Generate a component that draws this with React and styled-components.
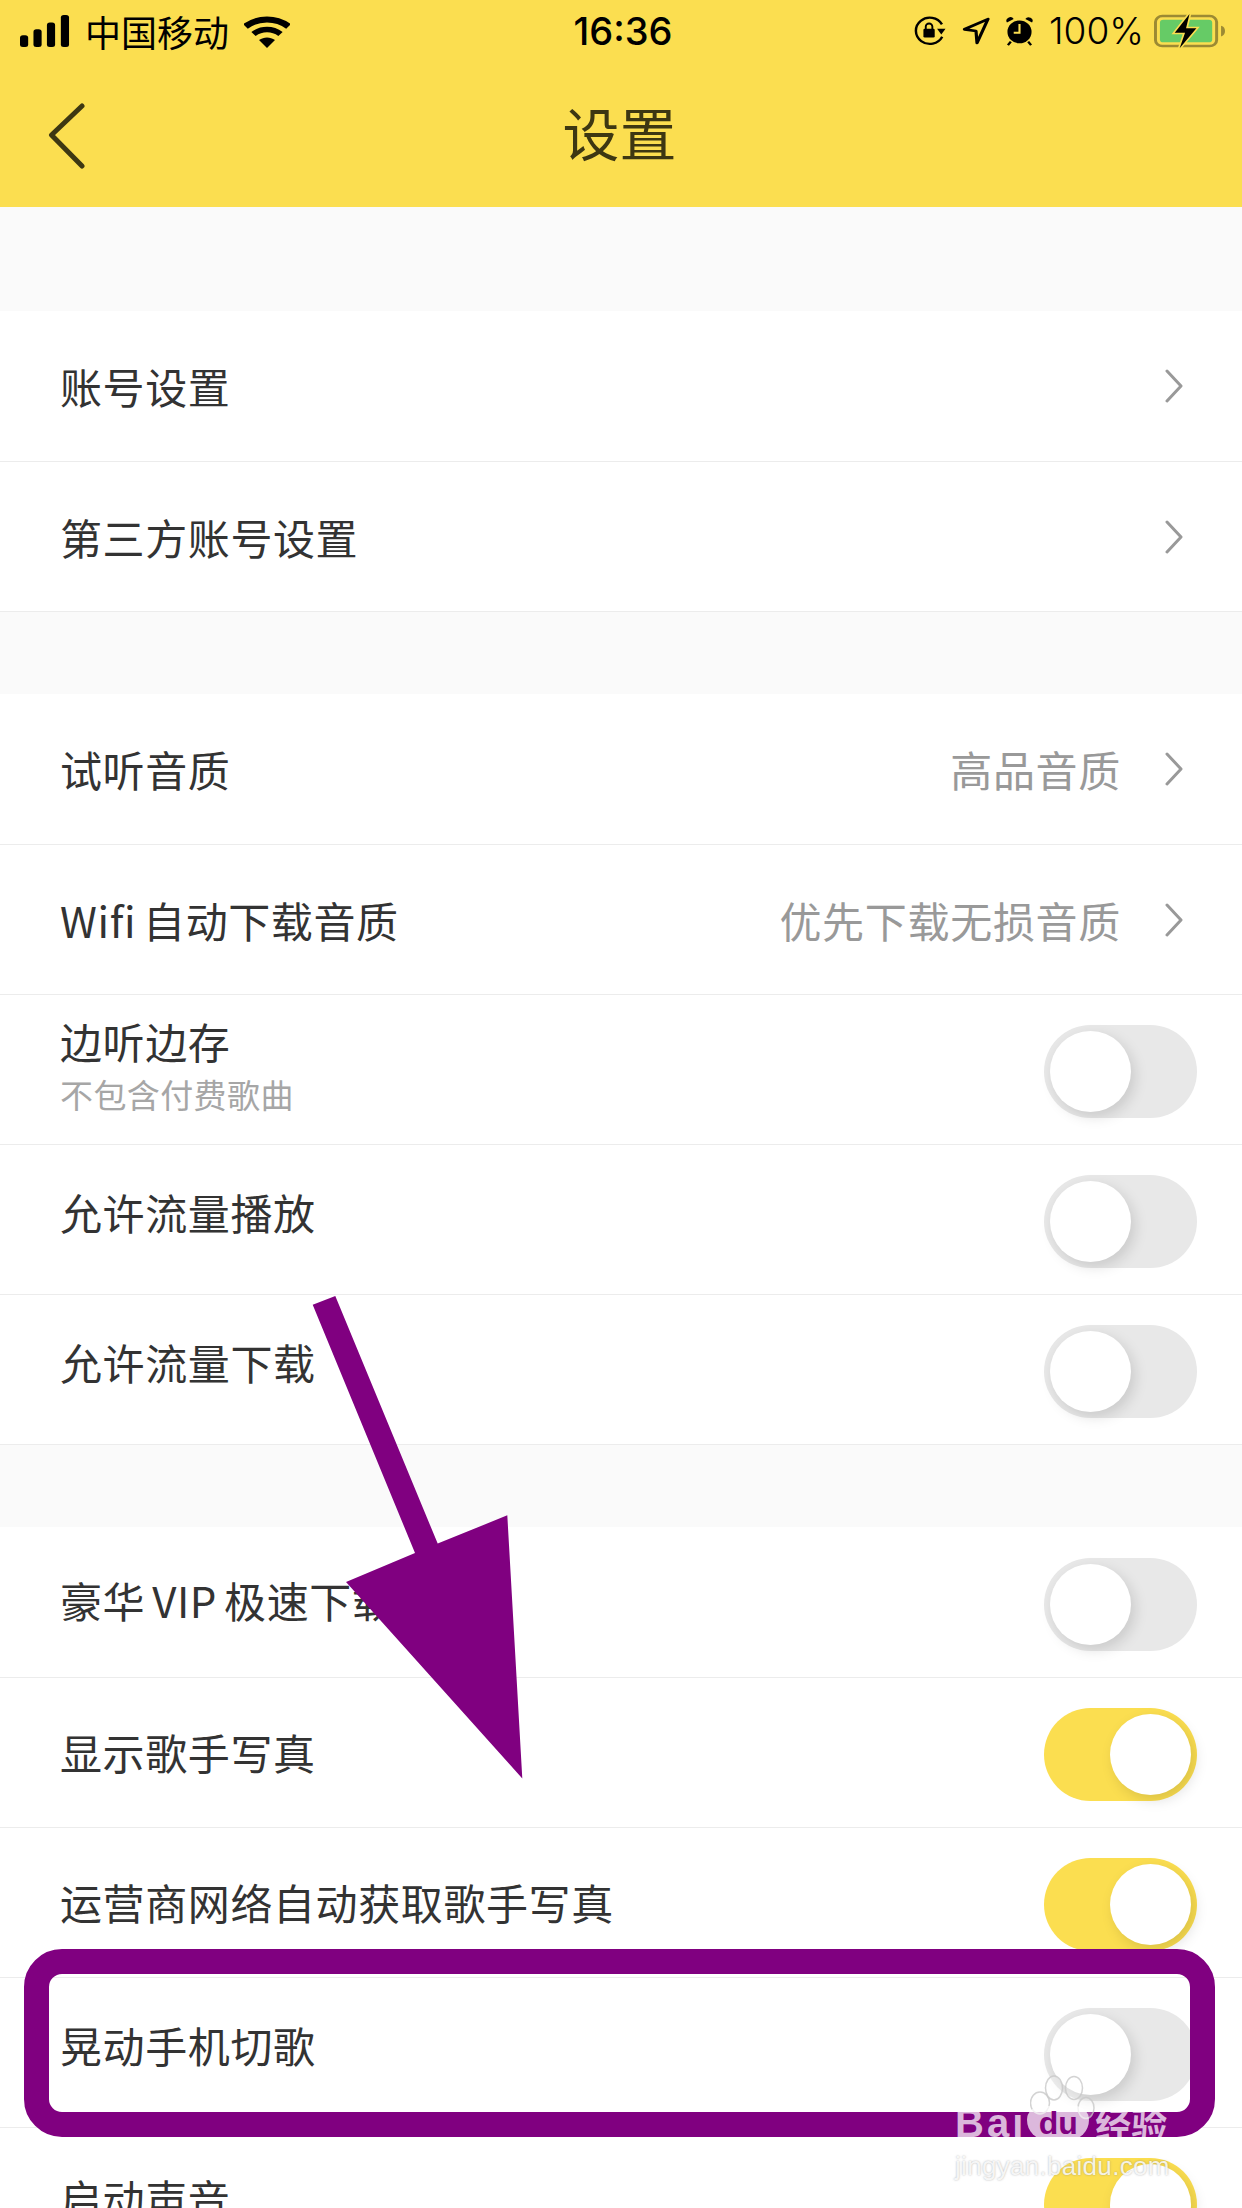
import styled, { createGlobalStyle } from 'styled-components';

const GlobalStyle = createGlobalStyle`
  html, body {
    margin: 0;
    padding: 0;
    background: #ffffff;
  }
`;

const FONT = `"Noto Sans CJK SC", "Noto Sans", sans-serif`;
const YELLOW = '#fbde50';
const PURPLE = '#800080';

// lift: the reference's labels don't all sit on the row's centre line
const sections = [
  {
    gap: 104,
    rows: [{ label: '账号设置' }, { label: '第三方账号设置' }],
  },
  {
    gap: 83,
    rows: [
      { label: '试听音质', value: '高品音质' },
      { label: 'Wifi 自动下载音质', value: '优先下载无损音质' },
      { label: '边听边存', sub: '不包含付费歌曲', toggle: 'off', lift: 7 },
      { label: '允许流量播放', toggle: 'off', lift: 8 },
      { label: '允许流量下载', toggle: 'off', lift: 8 },
    ],
  },
  {
    gap: 83,
    rows: [
      { label: '豪华 VIP 极速下载', toggle: 'off', lift: 2 },
      { label: '显示歌手写真', toggle: 'on', lift: 1 },
      { label: '运营商网络自动获取歌手写真', toggle: 'on', lift: 1 },
      { label: '晃动手机切歌', toggle: 'off', lift: 8 },
      { label: '启动声音', toggle: 'on', lift: 5 },
    ],
  },
];

const SignalIcon = () => (
  <svg width="50" height="32" viewBox="0 0 52 38" preserveAspectRatio="none">
    <rect x="0" y="24" width="8.500" height="14" rx="3" />
    <rect x="14" y="17" width="8.500" height="21" rx="3" />
    <rect x="28" y="9" width="8.500" height="29" rx="3" />
    <rect x="42.500" y="0" width="8.500" height="38" rx="3" />
  </svg>
);

const WifiIcon = () => (
  <svg width="46" height="33" viewBox="0 0 46 39" preserveAspectRatio="none">
    <path d="M1.500 13.500C14 2.500 32 2.500 44.500 13.500" fill="none" stroke="#000" strokeWidth="7" />
    <path d="M9.500 22.500C17.500 15.500 28.500 15.500 36.500 22.500" fill="none" stroke="#000" strokeWidth="6.500" />
    <path d="M15 29.500C20 25.500 26 25.500 31 29.500L23 39Z" />
  </svg>
);

const LockRotateIcon = () => (
  <svg width="32" height="30" viewBox="0 0 34 34" preserveAspectRatio="none">
    <path d="M30 23.500A14.800 14.800 0 1 1 29.700 9.500" fill="none" stroke="#000" strokeWidth="2.600" />
    <path d="M24.500 14.500h9l-4.500 6.500Z" />
    <rect x="10" y="14.500" width="12" height="10" rx="1.500" />
    <path d="M12.500 15v-3a3.500 3.500 0 0 1 7 0v3" fill="none" stroke="#000" strokeWidth="2" />
  </svg>
);

const LocationIcon = () => (
  <svg width="28" height="28" viewBox="0 0 28 33" preserveAspectRatio="none">
    <path d="M26 2.500L2.500 14.500L14 16.500L15 30.500Z" fill="none" stroke="#000" strokeWidth="3.200" strokeLinejoin="round" />
  </svg>
);

const AlarmIcon = () => (
  <svg width="27" height="30" viewBox="0 0 28 34" preserveAspectRatio="none">
    <ellipse cx="14" cy="18" rx="12.500" ry="13" />
    <path d="M1 7.500a4 4 0 0 1 7-4ZM27 7.500a4 4 0 0 0-7-4Z" />
    <path d="M5 29l-3 4M23 29l3 4" stroke="#000" strokeWidth="2.500" />
    <path d="M14 9v10H8" fill="none" stroke={YELLOW} strokeWidth="2.200" />
  </svg>
);

const BatteryIcon = () => (
  <svg width="72" height="35" viewBox="0 0 73 42" preserveAspectRatio="none">
    <rect x="1.500" y="2.500" width="62" height="36" rx="7" fill="none" stroke="#9c8a33" strokeWidth="3" />
    <path d="M68 14c3 1 4 3.500 4 6.500s-1 5.500-4 6.500Z" fill="#9c8a33" />
    <rect x="6" y="7" width="53" height="27" rx="3.500" fill="#66cb66" />
    <path d="M36 0L21 22.500H31.500L26 41L43 17H32.500Z" stroke={YELLOW} strokeWidth="3.500" paintOrder="stroke" />
  </svg>
);

const BackIcon = () => (
  <svg width="40" height="72" viewBox="0 0 40 72">
    <path d="M34 6L3.500 35L34 66" fill="none" stroke="#3d3712" strokeWidth="5" strokeLinecap="round" strokeLinejoin="round" />
  </svg>
);

const ChevronIcon = () => (
  <svg width="18" height="34" viewBox="0 0 18 34">
    <path d="M2 2L16 17L2 32" fill="none" stroke="#999999" strokeWidth="3" strokeLinecap="round" strokeLinejoin="round" />
  </svg>
);

const PawIcon = () => (
  <svg width="66" height="46" viewBox="0 0 66 46">
    <g fill="rgba(255,255,255,0.25)" stroke="#c8c8c8" strokeOpacity="0.8" strokeWidth="1.500">
      <ellipse cx="10" cy="28" rx="9.500" ry="11" />
      <ellipse cx="24" cy="13" rx="8.500" ry="12" />
      <ellipse cx="44" cy="13" rx="8.500" ry="11.500" />
      <ellipse cx="56" cy="33" rx="8" ry="10.500" />
    </g>
  </svg>
);

const SettingRow = ({ label, sub, value, toggle, lift = 0 }) => (
  <Row>
    <LabelBlock $lift={lift}>
      <Label>{label}</Label>
      {sub && <SubLabel>{sub}</SubLabel>}
    </LabelBlock>
    {value && <Value>{value}</Value>}
    {toggle ? (
      <Toggle $on={toggle === 'on'}>
        <Knob $on={toggle === 'on'} />
      </Toggle>
    ) : (
      <ChevronSlot>
        <ChevronIcon />
      </ChevronSlot>
    )}
  </Row>
);

const App = () => {
  return (
    <Page>
      <GlobalStyle />
      <Header>
        <StatusBar>
          <StatusLeft>
            <SignalIcon />
            <Carrier>中国移动</Carrier>
            <WifiIcon />
          </StatusLeft>
          <Clock>16:36</Clock>
          <StatusRight>
            <LockRotateIcon />
            <LocationIcon />
            <AlarmIcon />
            <Percent>100%</Percent>
            <BatteryIcon />
          </StatusRight>
        </StatusBar>
        <NavBar>
          <BackSlot>
            <BackIcon />
          </BackSlot>
          <Title>设置</Title>
        </NavBar>
      </Header>

      {sections.map((section, i) => (
        <Section key={i}>
          <SectionGap $height={section.gap} />
          {section.rows.map((row) => (
            <SettingRow key={row.label} {...row} />
          ))}
        </Section>
      ))}

      <Arrow viewBox="0 0 1242 2208">
        <polygon
          points="312.700,1304.800 335.300,1296 437.700,1543.600 507.300,1515.300 522.300,1778.400 346,1582 415,1553"
          fill={PURPLE}
        />
      </Arrow>
      <Highlight />
      <Watermark>
        <PawSlot>
          <PawIcon />
        </PawSlot>
        <WatermarkLogo>
          <WatermarkLatin>Bai</WatermarkLatin>
          <DuPad>du</DuPad>
          <WatermarkCn>经验</WatermarkCn>
        </WatermarkLogo>
        <WatermarkUrl>jingyan.baidu.com</WatermarkUrl>
      </Watermark>
    </Page>
  );
};

const Page = styled.div`
  position: relative;
  width: 1242px;
  height: 2208px;
  overflow: hidden;
  background: #ffffff;
  font-family: ${FONT};
  color: #333333;
`;

const Header = styled.header`
  height: 207px;
  background: ${YELLOW};
`;

const StatusBar = styled.div`
  display: grid;
  grid-template-columns: 1fr auto 1fr;
  align-items: center;
  height: 62px;
  padding: 0 16px 0 20px;
  color: #000000;
`;

const StatusLeft = styled.div`
  display: flex;
  align-items: center;
  gap: 15px;
`;

const StatusRight = styled.div`
  display: flex;
  align-items: center;
  justify-content: flex-end;
  gap: 16px;
`;

const Carrier = styled.span`
  font-size: 36px;
  line-height: 40px;
`;

const Clock = styled.span`
  font-family: Inter, "Liberation Sans", sans-serif;
  font-size: 38px;
  font-weight: 500;
  line-height: 40px;
`;

const Percent = styled.span`
  font-family: Inter, "Liberation Sans", sans-serif;
  font-size: 37px;
  font-weight: 300;
  line-height: 40px;
  margin-right: -6px;
`;

const NavBar = styled.nav`
  display: grid;
  grid-template-columns: 1fr auto 1fr;
  align-items: center;
  box-sizing: border-box;
  height: 145px;
  padding-bottom: 8px;
  color: #3d3712;
`;

const BackSlot = styled.div`
  display: flex;
  padding: 10px 0 0 48px;
`;

const Title = styled.h1`
  margin: 0;
  padding-right: 3px;
  font-size: 57px;
  font-weight: 400;
  line-height: 70px;
`;

const SectionGap = styled.div`
  box-sizing: border-box;
  height: ${({ $height }) => $height}px;
  background: #fafafa;
`;

const Section = styled.section`
  & + & ${SectionGap} {
    border-top: 1px solid #ececec;
  }
`;

const Row = styled.div`
  display: flex;
  align-items: center;
  box-sizing: border-box;
  height: 150px;
  padding: 0 45px 0 60px;
  background: #ffffff;

  & + & {
    border-top: 1px solid #ececec;
  }
`;

const LabelBlock = styled.div`
  display: flex;
  flex: 1;
  flex-direction: column;
  margin-bottom: ${({ $lift }) => $lift * 2}px;
`;

const Label = styled.span`
  font-size: 42px;
  line-height: 56px;
  font-weight: 400;
  letter-spacing: 0.6px;
  word-spacing: -3px;
`;

const SubLabel = styled.span`
  margin-top: 6px;
  font-size: 33px;
  line-height: 38px;
  letter-spacing: 0.4px;
  color: #a6a6a6;
`;

const Value = styled.span`
  margin-right: 44px;
  font-size: 42px;
  line-height: 56px;
  letter-spacing: 0.7px;
  color: #999999;
`;

const ChevronSlot = styled.span`
  display: flex;
  margin-right: 14px;
`;

const Toggle = styled.div`
  position: relative;
  width: 153px;
  height: 93px;
  margin-top: 4px;
  border-radius: 47px;
  background: ${({ $on }) => ($on ? YELLOW : '#e8e8e8')};
`;

const Knob = styled.div`
  position: absolute;
  top: 6px;
  left: ${({ $on }) => ($on ? '66px' : '6px')};
  width: 81px;
  height: 81px;
  border-radius: 50%;
  background: #ffffff;
  box-shadow: 4px 5px 14px rgba(0, 0, 0, 0.13);
`;

const Arrow = styled.svg`
  position: absolute;
  top: 0;
  left: 0;
  width: 1242px;
  height: 2208px;
  pointer-events: none;
`;

const Highlight = styled.div`
  position: absolute;
  left: 24px;
  top: 1949px;
  box-sizing: border-box;
  width: 1191px;
  height: 188px;
  border: 25px solid ${PURPLE};
  border-radius: 38px;
`;

const Watermark = styled.div`
  position: absolute;
  left: 955px;
  top: 2075px;
  display: flex;
  flex-direction: column;
  width: 240px;
`;

const PawSlot = styled.div`
  display: flex;
  height: 33px;
  padding-left: 75px;
`;

const WatermarkLogo = styled.div`
  display: flex;
  align-items: center;
  height: 30px;
`;

const WatermarkLatin = styled.span`
  font-family: "Liberation Sans", sans-serif;
  font-size: 40px;
  font-weight: 700;
  line-height: 30px;
  letter-spacing: 3px;
  color: rgba(255, 255, 255, 0.72);
`;

const DuPad = styled.span`
  width: 62px;
  margin-left: 1px;
  border-radius: 14px 14px 20px 20px;
  font-family: "Liberation Sans", sans-serif;
  font-size: 32px;
  font-weight: 700;
  line-height: 34px;
  text-align: center;
  color: ${PURPLE};
  background: rgba(255, 255, 255, 0.72);
`;

const WatermarkCn = styled.span`
  margin-left: 6px;
  font-size: 36px;
  font-weight: 700;
  line-height: 30px;
  color: rgba(255, 255, 255, 0.72);
`;

const WatermarkUrl = styled.div`
  margin-top: 13px;
  font-family: "Liberation Sans", sans-serif;
  font-size: 26px;
  line-height: 30px;
  letter-spacing: 0.3px;
  color: rgba(255, 255, 255, 0.85);
  text-shadow: 0 0 2px rgba(110, 110, 110, 0.55);
`;

export default App;
